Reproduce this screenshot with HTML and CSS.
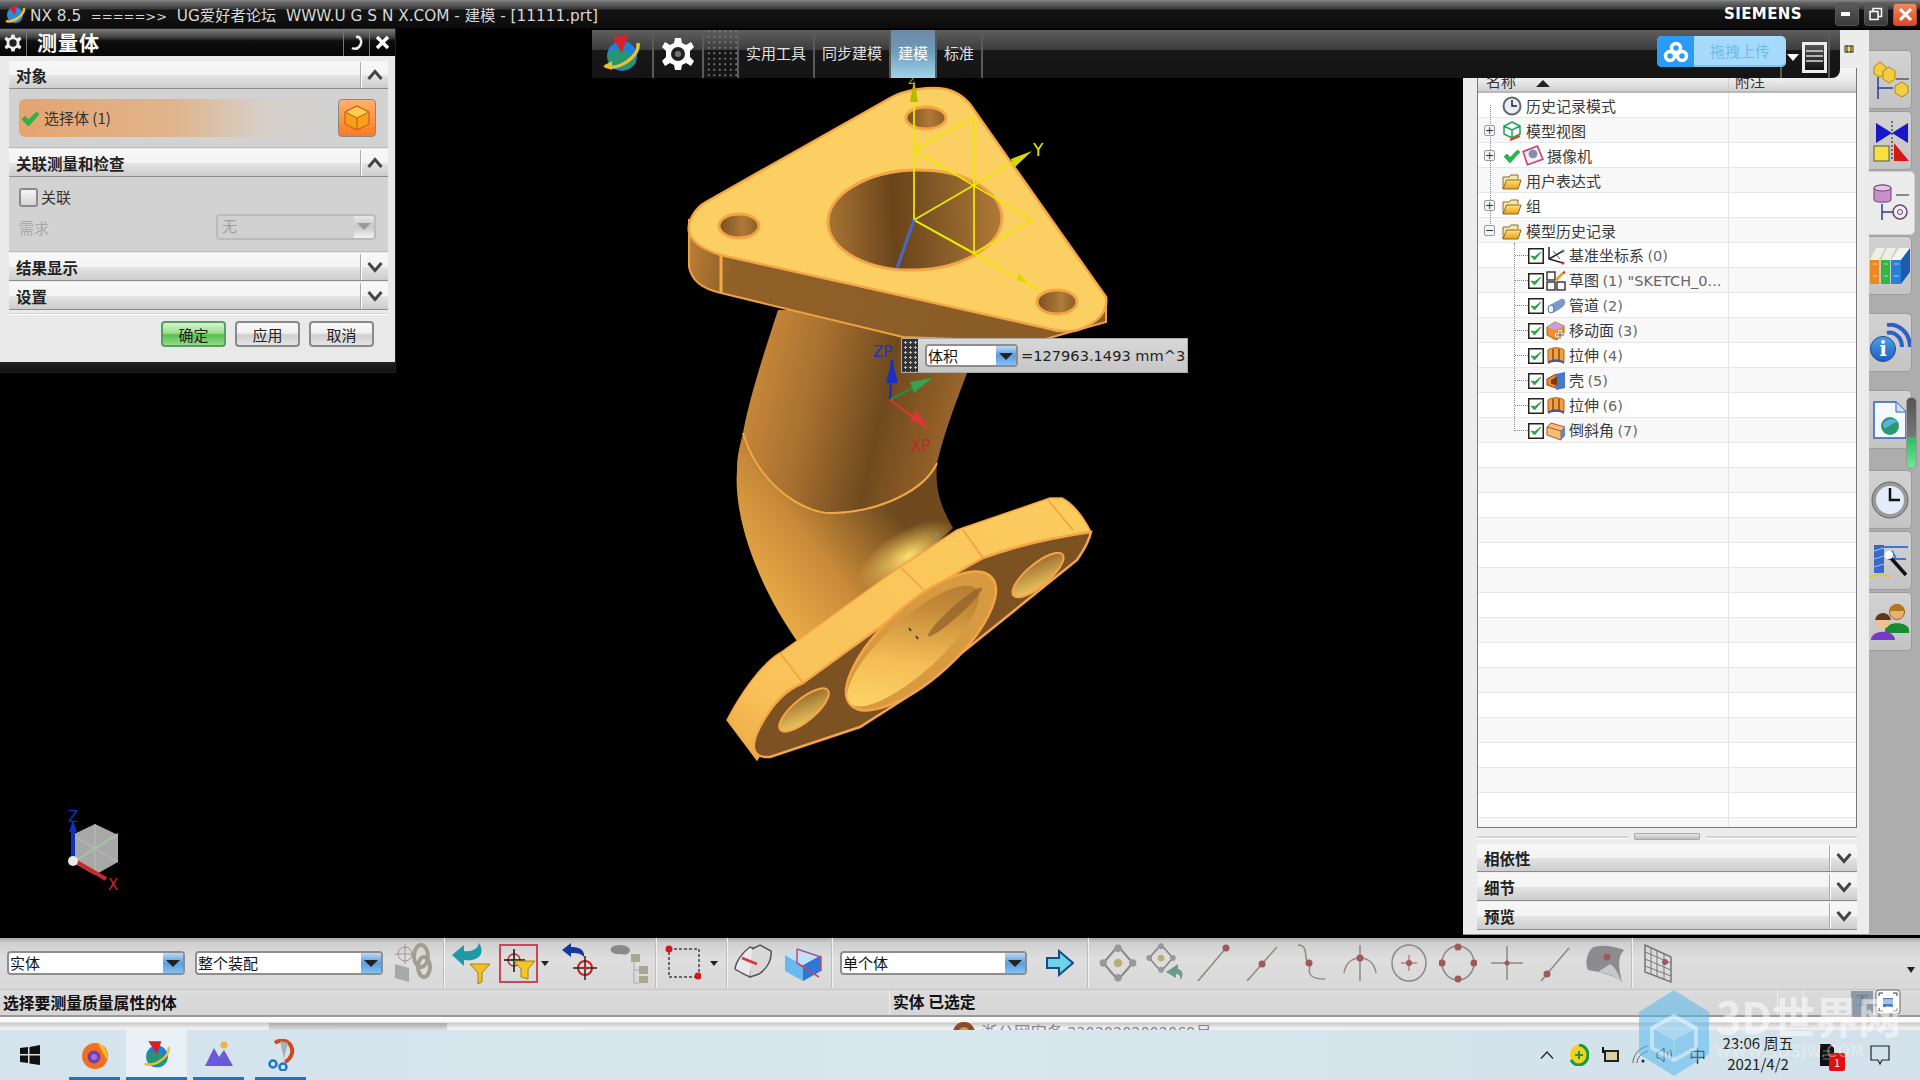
FILE: index.html
```html
<!DOCTYPE html>
<html lang="zh">
<head>
<meta charset="utf-8">
<title>NX 8.5</title>
<link rel="stylesheet" href="styles.css">
</head>
<body>
<svg class="sprite" width="0" height="0">
  <defs>
    <linearGradient id="gBlue" x1="0" y1="0" x2="0" y2="1"><stop offset="0" stop-color="#4aa0e8"/><stop offset="1" stop-color="#1c5fc0"/></linearGradient>
    <linearGradient id="gFolder" x1="0" y1="0" x2="0" y2="1"><stop offset="0" stop-color="#ffe27a"/><stop offset="1" stop-color="#e8a018"/></linearGradient>
    <symbol id="chevDown" viewBox="0 0 16 12"><path d="M1.500 2 8 9.500 14.500 2" fill="none" stroke="#444" stroke-width="3"/></symbol>
    <symbol id="chevUp" viewBox="0 0 16 12"><path d="M1.500 10 8 2.500 14.500 10" fill="none" stroke="#444" stroke-width="3"/></symbol>
    <symbol id="tick" viewBox="0 0 16 16"><path d="M0 8.500 3 6 6 9.500 13.500 2 16 4 6 15z" fill="#22b84a" stroke="#1a9a3c" stroke-width=".6"/></symbol>
    <symbol id="folder" viewBox="0 0 20 18"><path d="M1 17V5h6l2-2h7v4" fill="#f6e7b0" stroke="#8a6a20"/><path d="M1 17 4.500 8H19l-3 9z" fill="url(#gFolder)" stroke="#8a6a20"/></symbol>
    <symbol id="extrude" viewBox="0 0 20 20"><path d="M2 4C6 1 14 1 18 4V16C14 13 6 13 2 16z" fill="#f0a040" stroke="#a8601a"/><path d="M7 3V14M13 3V14" stroke="#8a4a10" stroke-width="1.500"/><path d="M2 16C6 13 14 13 18 16L18 18C14 15 6 15 2 18z" fill="#3a50b0"/></symbol>
    <symbol id="boxcheck" viewBox="0 0 16 16"><rect x=".75" y=".75" width="14.500" height="14.500" fill="#fff" stroke="#222" stroke-width="1.500"/><path d="M3 8 6.500 12 13 4 6.800 8.800z" fill="#22a83c" stroke="#22a83c"/></symbol>
    <symbol id="snap" viewBox="0 0 38 38"><path d="M19 3 33 19 19 35 5 19z" fill="none" stroke="#888" stroke-width="2"/><g fill="#999"><circle cx="19" cy="5" r="3.500"/><circle cx="33" cy="19" r="3.500"/><circle cx="19" cy="33" r="3.500"/><circle cx="5" cy="19" r="3.500"/></g><circle cx="19" cy="19" r="4" fill="#b8b070"/></symbol>
  </defs>
</svg>

<header class="titlebar">
  <svg class="title-logo" width="24" height="22" viewBox="0 0 24 22"><circle cx="12" cy="12" r="8" fill="#2a8ae0"/><path d="M6 5 14 2 12 12z" fill="#d8202c"/><path d="M3 18C10 20 22 12 21 5" fill="none" stroke="#f0c030" stroke-width="2.500"/></svg>
  <span class="title-text">NX 8.5  <span class="title-arrow">=====&gt;&gt;</span>  UG爱好者论坛  WWW.U G S N X.COM - 建模 - [11111.prt]</span>
  <span class="brand">SIEMENS</span>
  <div class="winbtns">
    <span class="winbtn"><svg width="12" height="6" viewBox="0 0 12 6"><rect y="1" width="9" height="4" fill="#fff"/></svg></span>
    <span class="winbtn"><svg width="14" height="14" viewBox="0 0 14 14" fill="none" stroke="#fff" stroke-width="1.500"><rect x="1" y="4.500" width="8" height="8"/><path d="M4 4V1.500H12.500V9.500H9.500"/></svg></span>
    <span class="winbtn winbtn-close"><svg width="15" height="15" viewBox="0 0 15 15"><path d="M2 2 13 13M13 2 2 13" stroke="#fff" stroke-width="3"/></svg></span>
  </div>
</header>

<main class="main">
  <section class="viewport">
    <svg class="model" viewBox="0 28 1463 910" width="1463" height="910">
      <defs>
        <linearGradient id="pipeUp" gradientUnits="userSpaceOnUse" x1="745" y1="380" x2="965" y2="430"><stop offset="0" stop-color="#c98a3a"/><stop offset=".3" stop-color="#a87030"/><stop offset=".62" stop-color="#6f4a1e"/><stop offset=".82" stop-color="#8a5a25"/><stop offset="1" stop-color="#a06c2e"/></linearGradient>
        <linearGradient id="pipeLow" gradientUnits="userSpaceOnUse" x1="750" y1="600" x2="880" y2="495"><stop offset="0" stop-color="#eeaf48"/><stop offset=".5" stop-color="#c88a38"/><stop offset="1" stop-color="#6f4a1e"/></linearGradient>
        <radialGradient id="glow"><stop offset="0" stop-color="#ffe070"/><stop offset="1" stop-color="#ffd060" stop-opacity="0"/></radialGradient>
        <linearGradient id="side" gradientUnits="userSpaceOnUse" x1="690" y1="260" x2="1100" y2="330"><stop offset="0" stop-color="#b87c35"/><stop offset=".1" stop-color="#8f6028"/><stop offset="1" stop-color="#8a5c26"/></linearGradient>
        <linearGradient id="holeBig" x1="0" y1="0" x2="1" y2="0"><stop offset="0" stop-color="#a87434"/><stop offset=".38" stop-color="#6a441a"/><stop offset=".55" stop-color="#7a5222"/><stop offset="1" stop-color="#b07a38"/></linearGradient>
        <linearGradient id="holeSmall" x1="0" y1="0" x2="1" y2="0"><stop offset="0" stop-color="#7a5020"/><stop offset=".6" stop-color="#b07a38"/><stop offset="1" stop-color="#8a5c26"/></linearGradient>
        <linearGradient id="faceLight" x1="0" y1="1" x2="1" y2="0"><stop offset="0" stop-color="#eaa845"/><stop offset=".18" stop-color="#f8c258"/><stop offset="1" stop-color="#fccb5e"/></linearGradient>
        <linearGradient id="borePipe" gradientUnits="userSpaceOnUse" x1="860" y1="700" x2="985" y2="590"><stop offset="0" stop-color="#ffd868"/><stop offset=".35" stop-color="#f4bd55"/><stop offset=".7" stop-color="#c48a38"/><stop offset="1" stop-color="#a87030"/></linearGradient>
        <linearGradient id="holeLit" x1="0" y1="1" x2="1" y2="0"><stop offset="0" stop-color="#ffd868"/><stop offset="1" stop-color="#8a5c26"/></linearGradient>
      </defs>
      <!-- pipe -->
      <path d="M778 310C765 350 750 395 743 433C760 490 810 515 833 513C880 512 925 490 937 463C945 430 955 405 967 373L1010 310z" fill="url(#pipeUp)"/>
      <path d="M743 433C760 490 810 515 833 513C880 512 925 490 937 463C935 490 940 505 953 528L900 575 800 645C760 590 733 520 737 470C737 455 740 445 743 433z" fill="url(#pipeLow)"/>
      <ellipse cx="908" cy="556" rx="56" ry="26" fill="url(#glow)" transform="rotate(-30 908 556)"/>
      <path d="M743 433C760 490 810 515 833 513C880 512 925 490 937 463" fill="none" stroke="#f0a848" stroke-width="2"/>
      <!-- top flange -->
      <path d="M689 220V267C692 280 700 288 721 293L903 337 1035 342 1106 322V297L721 230z" fill="url(#side)" stroke="#f0a040" stroke-width="2"/>
      <path d="M721 255V293" stroke="#f5a848" stroke-width="3"/>
      <path d="M892 97C905 90 930 86 945 89C958 92 968 100 974 110L1106 297C1108 310 1100 322 1078 330C1068 332 1055 331 1046 328L721 255C705 250 692 243 689 232C687 222 695 208 706 202z" fill="#fccf62" stroke="#f5a545" stroke-width="2.500"/>
      <ellipse cx="915" cy="220" rx="87" ry="50" fill="url(#holeBig)" stroke="#f5a545" stroke-width="3" transform="rotate(-2 915 220)"/>
      <ellipse cx="926" cy="118" rx="20" ry="11" fill="url(#holeSmall)" stroke="#f5a545" stroke-width="3"/>
      <ellipse cx="739" cy="226" rx="20" ry="12" fill="url(#holeSmall)" stroke="#f5a545" stroke-width="3"/>
      <ellipse cx="1057" cy="302" rx="20" ry="12" fill="url(#holeSmall)" stroke="#f5a545" stroke-width="3"/>
      <!-- bottom flange -->
      <path d="M727 720C740 695 760 665 780 653L900 567 957 530 1050 498H1062C1075 505 1085 520 1091 532L1000 560 800 690 757 760z" fill="url(#faceLight)" stroke="#f5a545" stroke-width="1.500"/>
      <path d="M1091 532C1088 545 1082 552 1077 560L907 697 860 727 770 757C755 758 750 750 757 733C770 705 785 690 803 683L927 593C945 580 960 570 983 558C1010 548 1050 538 1091 532z" fill="#7d5222" stroke="#f5a545" stroke-width="2.500"/>
      <path d="M900 567 927 593M963 530 983 558M780 653 803 683M1048 500 1073 530" stroke="#f0a040" stroke-width="1.500"/>
      <ellipse cx="921" cy="641" rx="95" ry="37" fill="#d89a40" stroke="#f5a545" stroke-width="2.500" transform="rotate(-42 921 641)"/>
      <ellipse cx="913" cy="646" rx="85" ry="27" fill="url(#borePipe)" transform="rotate(-42 913 646)"/>
      <ellipse cx="955" cy="612" rx="36" ry="5" fill="#8f6028" opacity=".7" transform="rotate(-42 955 612)"/>
      <ellipse cx="1038" cy="575" rx="32" ry="11" fill="url(#holeLit)" stroke="#f5a545" stroke-width="2" transform="rotate(-40 1038 575)"/>
      <ellipse cx="804" cy="710" rx="31" ry="11" fill="url(#holeLit)" stroke="#f5a545" stroke-width="2" transform="rotate(-40 804 710)"/>
      <path d="M935 541 938 532" stroke="#8a8a70" stroke-width="2"/>
      <path d="M909 628 911 631M916 636 918 639" stroke="#444" stroke-width="2"/>
      <!-- WCS -->
      <g stroke="#e8e800" stroke-width="1.800" fill="none">
        <path d="M914 90V220"/>
        <path d="M914 220 1017 160M914 220 1039 290"/>
        <path d="M914 150 974 117V253M914 150 1032 220 974 253 914 220"/>
      </g>
      <path d="M914 80 918 102H910z" fill="#b8b800"/>
      <path d="M1032 151 1014 168 1011 159z" fill="#d8d800"/>
      <path d="M1027 283 1017 280 1019 273z" fill="#d8d800"/>
      <path d="M914 220 897 268" stroke="#4868c8" stroke-width="3"/>
      <text class="axis-label axis-y" x="1033" y="156">Y</text>
      <text class="axis-label axis-z" x="908" y="84">Z</text>
      <!-- part triad -->
      <g>
        <path d="M890 400 892 360" stroke="#1830c0" stroke-width="2.500"/>
        <path d="M892 360 898 383H886z" fill="#1830c0"/>
        <path d="M890 400 931 378" stroke="#209040" stroke-width="2"/>
        <path d="M932 378 914 393 910 382z" fill="#38a050"/>
        <path d="M890 400 928 428" stroke="#d83838" stroke-width="2"/>
        <path d="M929 429 910 420 916 410z" fill="#d83838"/>
        <text class="axis-label axis-zp" x="873" y="357">ZP</text>
        <text class="axis-label axis-xp" x="911" y="451">XP</text>
      </g>
      <!-- view triad -->
      <g>
        <path d="M95 824 118 835V862L95 875 72 862V835z" fill="#a8a8a8"/>
        <path d="M95 824V875M72 835 118 862M118 835 72 862" stroke="#bcbcbc" stroke-width="1"/>
        <path d="M75 861 118 834" stroke="#a0c8a0" stroke-width="2"/>
        <path d="M73 861V830" stroke="#1030c0" stroke-width="4"/>
        <path d="M73 820 77 832H69z" fill="#1030c0"/>
        <path d="M75 861 106 879" stroke="#c82828" stroke-width="4"/>
        <circle cx="73" cy="861" r="5" fill="#e8e8e8"/>
        <text class="axis-label axis-view-z" x="68" y="822">Z</text>
        <text class="axis-label axis-view-x" x="108" y="890">X</text>
      </g>
    </svg>

    <div class="ribbon">
      <div class="rb-cell rb-logo">
        <svg width="44" height="42" viewBox="0 0 44 42"><circle cx="22" cy="23" r="15" fill="#1f80d8"/><path d="M8 20C14 14 30 14 36 30 30 38 14 38 8 28z" fill="#2c9c50" opacity=".75"/><path d="M12 4 28 2 22 20z" fill="#d8202c"/><path d="M5 33C18 38 40 24 38 10" fill="none" stroke="#e8c030" stroke-width="3.500"/><path d="M3 33 12 28V37z" fill="#e8c030"/></svg>
      </div>
      <div class="rb-cell rb-gear">
        <svg width="34" height="34" viewBox="0 0 34 34"><path d="M14 1H20L21 6 25 8 30 5 33 10 29 14V20L33 24 30 29 25 26 21 28 20 33H14L13 28 9 26 4 29 1 24 5 20V14L1 10 4 5 9 8 13 6z" fill="#fff"/><circle cx="17" cy="17" r="7" fill="#222"/><circle cx="17" cy="17" r="3" fill="#777"/></svg>
      </div>
      <div class="rb-cell rb-grid"></div>
      <div class="rb-cell rb-tab rb-w76">实用工具</div>
      <div class="rb-cell rb-tab rb-w76">同步建模</div>
      <div class="rb-cell rb-tab rb-active">建模</div>
      <div class="rb-cell rb-tab rb-w46">标准</div>
      <div class="rb-cell rb-fill"></div>
      <div class="rb-cell rb-menu">
        <span class="rb-tri"></span>
        <span class="rb-burger"><svg width="19" height="23" viewBox="0 0 19 23"><path d="M1 5H18M1 10H18M1 15H18" stroke="#ddd" stroke-width="1.500"/></svg></span>
      </div>
      <div class="rb-end"></div>
      <div class="upload">
        <span class="upload-icon"><svg width="26" height="22" viewBox="0 0 26 22" fill="none" stroke="#fff" stroke-width="3.500"><circle cx="13" cy="7" r="4.500"/><circle cx="7" cy="15" r="4.500"/><circle cx="19" cy="15" r="4.500"/></svg></span>
        <span class="upload-text">拖拽上传</span>
      </div>
    </div>

    <aside class="dialog">
      <div class="dlg-head">
        <span class="dlg-gear"><svg width="18" height="18" viewBox="0 0 34 34"><path d="M14 1H20L21 6 25 8 30 5 33 10 29 14V20L33 24 30 29 25 26 21 28 20 33H14L13 28 9 26 4 29 1 24 5 20V14L1 10 4 5 9 8 13 6z" fill="#eee"/><circle cx="17" cy="17" r="7" fill="#222"/></svg></span>
        <span class="dlg-title">测量体</span>
        <span class="dlg-btn"><svg width="16" height="16" viewBox="0 0 16 16"><path d="M7 2C12 1 14 8 10 12 8 14 5 14 3 13" fill="none" stroke="#eee" stroke-width="2.500"/></svg></span>
        <span class="dlg-btn"><svg width="15" height="15" viewBox="0 0 15 15"><path d="M2 2 13 13M13 2 2 13" stroke="#fff" stroke-width="3.500"/></svg></span>
      </div>
      <div class="dlg-body">
        <div class="acc-head"><span class="acc-label">对象</span><span class="acc-tog"><svg width="16" height="12"><use href="#chevUp"/></svg></span></div>
        <div class="dlg-sec dlg-sec-obj">
          <div class="sel-row"><svg class="sel-tick" width="17" height="17"><use href="#tick"/></svg><span>选择体 (1)</span></div>
          <span class="sel-btn"><svg width="28" height="28" viewBox="0 0 28 28"><path d="M14 2 26 8V20L14 26 2 20V8z" fill="#f9a018" stroke="#b85a10"/><path d="M2 8 14 14 26 8 14 2z" fill="#ffcc50" stroke="#b85a10"/><path d="M14 14V26" stroke="#b85a10"/></svg></span>
        </div>
        <div class="acc-head"><span class="acc-label">关联测量和检查</span><span class="acc-tog"><svg width="16" height="12"><use href="#chevUp"/></svg></span></div>
        <div class="dlg-sec dlg-sec-assoc">
          <label class="chk-row"><span class="chk"></span><span>关联</span></label>
          <div class="req-row"><span class="req-label">需求</span>
            <span class="combo combo-off combo-req"><span class="combo-val">无</span><span class="combo-btn"></span></span>
          </div>
        </div>
        <div class="acc-head acc-result"><span class="acc-label">结果显示</span><span class="acc-tog"><svg width="16" height="12"><use href="#chevDown"/></svg></span></div>
        <div class="acc-head acc-set"><span class="acc-label">设置</span><span class="acc-tog"><svg width="16" height="12"><use href="#chevDown"/></svg></span></div>
        <div class="dlg-actions">
          <button class="btn btn-ok">确定</button>
          <button class="btn">应用</button>
          <button class="btn">取消</button>
        </div>
      </div>
      <div class="dlg-foot"></div>
    </aside>

    <div class="readout">
      <span class="readout-grip"></span>
      <span class="combo combo-read"><span class="combo-val">体积</span><span class="combo-btn"></span></span>
      <span class="readout-val">=127963.1493 mm^3</span>
    </div>
  </section>

  <section class="panel">
    <svg class="pin" width="10" height="10" viewBox="0 0 10 10"><rect x="1" y="2" width="8" height="6" fill="#f0e060" stroke="#333"/><path d="M3 1V9M7 1V9" stroke="#333"/></svg>
    <div class="tree">
      <div class="tree-head">
        <span class="th-name">名称<svg class="sort" width="14" height="7" viewBox="0 0 14 7"><path d="M7 0 14 7H0z" fill="#222"/></svg></span>
        <span class="th-note">附注</span>
      </div>
      <div class="tree-body">
        <span class="vline vline-a"></span><span class="vline vline-b"></span>

        <div class="row"><span class="exp exp-none"></span><svg class="ico" width="20" height="20" viewBox="0 0 20 20"><circle cx="10" cy="10" r="8.500" fill="#e8eef8" stroke="#666" stroke-width="2"/><path d="M10 4V10H15" stroke="#222" stroke-width="1.500" fill="none"/></svg><span class="lbl">历史记录模式</span></div>
        <div class="row"><span class="exp">+</span><svg class="ico" width="20" height="20" viewBox="0 0 20 20" fill="none" stroke="#20a060" stroke-width="1.500"><path d="M10 1 18 5V13L10 17 2 13V5zM2 5 10 9 18 5M10 9V17"/><path d="M8 19 18 15" stroke="#e04020" stroke-width="2"/></svg><span class="lbl">模型视图</span></div>
        <div class="row"><span class="exp">+</span><svg class="ico-tick" width="16" height="16"><use href="#tick"/></svg><svg class="ico" width="20" height="20" viewBox="0 0 20 20"><path d="M1 6 14 1 19 13 5 18z" fill="#f4f0f4" stroke="#d04070" stroke-width="1.500"/><circle cx="10" cy="8" r="4" fill="#8090b0"/></svg><span class="lbl lbl-cam">摄像机</span></div>
        <div class="row"><span class="exp exp-none"></span><svg class="ico" width="20" height="20"><use href="#folder"/></svg><span class="lbl">用户表达式</span></div>
        <div class="row"><span class="exp">+</span><svg class="ico" width="20" height="20"><use href="#folder"/></svg><span class="lbl">组</span></div>
        <div class="row"><span class="exp">−</span><svg class="ico" width="20" height="20"><use href="#folder"/></svg><span class="lbl">模型历史记录</span></div>

        <div class="row row-sub"><span class="elbow"></span><svg class="cb" width="16" height="16"><use href="#boxcheck"/></svg><svg class="ico-sub" width="20" height="20" viewBox="0 0 20 20" fill="none"><path d="M3 1V13L17 17M3 13 17 5" stroke="#222" stroke-width="1.500"/><path d="M7 5 14 13" stroke="#555"/><circle cx="17" cy="5" r="1.500" fill="#20a040"/><circle cx="17" cy="17" r="1.500" fill="#d03030"/></svg><span class="lbl">基准坐标系 <em>(0)</em></span></div>
        <div class="row row-sub"><span class="elbow"></span><svg class="cb" width="16" height="16"><use href="#boxcheck"/></svg><svg class="ico-sub" width="20" height="20" viewBox="0 0 20 20" fill="none" stroke="#222" stroke-width="1.300"><rect x="1" y="1" width="8" height="8"/><rect x="1" y="11" width="8" height="8"/><rect x="11" y="11" width="8" height="8"/><path d="M10 9 17 2" stroke="#e8a020" stroke-width="2.500"/><path d="M17 2 19 1" stroke="#d02020" stroke-width="2"/></svg><span class="lbl">草图 <em>(1) "SKETCH_0...</em></span></div>
        <div class="row row-sub"><span class="elbow"></span><svg class="cb" width="16" height="16"><use href="#boxcheck"/></svg><svg class="ico-sub" width="20" height="20" viewBox="0 0 20 20"><path d="M4 9 15 3C18 2 20 5 19 8 18 11 8 17 6 17 2 18 0 12 4 9z" fill="#7a98c8"/><ellipse cx="5" cy="13" rx="3" ry="4" fill="#f0f4fa" stroke="#5070a0"/></svg><span class="lbl">管道 <em>(2)</em></span></div>
        <div class="row row-sub"><span class="elbow"></span><svg class="cb" width="16" height="16"><use href="#boxcheck"/></svg><svg class="ico-sub" width="20" height="20" viewBox="0 0 20 20"><path d="M1 6 9 1 18 5V14L10 19 1 14z" fill="#f09030" stroke="#a86020"/><path d="M1 6 9 1 18 5 10 9z" fill="#c8a0e0"/><path d="M14 9V19M9 14H19" stroke="#fff" stroke-width="3"/><path d="M14 10V18M10 14H18" stroke="#555" stroke-width="1"/></svg><span class="lbl">移动面 <em>(3)</em></span></div>
        <div class="row row-sub"><span class="elbow"></span><svg class="cb" width="16" height="16"><use href="#boxcheck"/></svg><svg class="ico-sub" width="20" height="20"><use href="#extrude"/></svg><span class="lbl">拉伸 <em>(4)</em></span></div>
        <div class="row row-sub"><span class="elbow"></span><svg class="cb" width="16" height="16"><use href="#boxcheck"/></svg><svg class="ico-sub" width="20" height="20" viewBox="0 0 20 20"><path d="M1 8 10 3V17L1 14z" fill="#e88a30" stroke="#8a4a10"/><path d="M10 3 19 1V17L10 19z" fill="#4a78c8"/><path d="M5 9 11 6V14L5 13z" fill="#7a3a10"/></svg><span class="lbl">壳 <em>(5)</em></span></div>
        <div class="row row-sub"><span class="elbow"></span><svg class="cb" width="16" height="16"><use href="#boxcheck"/></svg><svg class="ico-sub" width="20" height="20"><use href="#extrude"/></svg><span class="lbl">拉伸 <em>(6)</em></span></div>
        <div class="row row-sub"><span class="elbow"></span><svg class="cb" width="16" height="16"><use href="#boxcheck"/></svg><svg class="ico-sub" width="20" height="20" viewBox="0 0 20 20"><path d="M1 6 5 2 19 6 15 10 1 6V14L15 19V10" fill="#f0c070" stroke="#c04848"/><path d="M15 10 19 6V15L15 19z" fill="#5a88d0"/></svg><span class="lbl">倒斜角 <em>(7)</em></span></div>
      </div>
    </div>
    <div class="splitter"><span class="split-line"></span><span class="split-grip"></span><span class="split-line"></span></div>
    <div class="panel-acc">
      <div class="acc-head"><span class="acc-label">相依性</span><span class="acc-tog"><svg width="16" height="12"><use href="#chevDown"/></svg></span></div>
      <div class="acc-head"><span class="acc-label">细节</span><span class="acc-tog"><svg width="16" height="12"><use href="#chevDown"/></svg></span></div>
      <div class="acc-head"><span class="acc-label">预览</span><span class="acc-tog"><svg width="16" height="12"><use href="#chevDown"/></svg></span></div>
    </div>
  </section>

  <nav class="tabs">
    <span class="tab"><svg width="38" height="42" viewBox="0 0 38 42"><g fill="#f4cc40" stroke="#b08a10"><path d="M3 8 9 3 15 8V15L9 18 3 15z"/><path d="M12 12 18 8 24 12V20L18 24 12 20z"/><path d="M24 27 31 23 37 27V34L31 38 24 34z"/></g><path d="M7 18V40M7 29H22" stroke="#2a3aa0" stroke-width="1.500" fill="none"/><path d="M25 20H38" stroke="#222"/></svg></span>
    <span class="tab"><svg width="38" height="42" viewBox="0 0 38 42"><path d="M5 3 21 13 5 23zM37 3 21 13 37 23z" fill="#1818c8"/><rect x="3" y="26" width="15" height="15" fill="#f4e040" stroke="#555"/><path d="M23 23 38 41H23z" fill="#d81818"/><path d="M21 1V41" stroke="#111" stroke-dasharray="2 2"/></svg></span>
    <span class="tab tab-on"><svg width="38" height="42" viewBox="0 0 38 42"><path d="M2 6C2 2 19 2 19 6V18C19 21 2 21 2 18z" fill="#c890c8" stroke="#704070"/><ellipse cx="10.500" cy="6" rx="8.500" ry="3" fill="#e8c0e8" stroke="#704070"/><path d="M10 22V38M10 30H22" stroke="#2a3aa0" stroke-width="1.500" fill="none"/><circle cx="28" cy="30" r="7" fill="none" stroke="#704070" stroke-width="1.500"/><circle cx="28" cy="30" r="2.500" fill="none" stroke="#704070"/><path d="M24 13H37" stroke="#222"/></svg></span>
    <span class="tab tab-books"><svg width="42" height="40" viewBox="0 0 42 40"><path d="M1 14H10V38H1z" fill="#e88a20"/><path d="M1 14 7 2H16L10 14z" fill="#f0f0e0"/><path d="M12 14H21V38H12z" fill="#30b840"/><path d="M12 14 18 2H27L21 14z" fill="#f0f0e0"/><path d="M22 14H32V38H22z" fill="#2a80d8"/><path d="M22 14 30 2H41L32 14z" fill="#f4f4f0"/><path d="M32 14 41 2V26L32 38z" fill="#1c5cb0"/><path d="M4 18H8M15 18H19M25 18H30M4 30H8M15 30H19M25 30H30" stroke="#fff" opacity=".6"/></svg></span>
    <span class="tab tab-gap"><svg width="42" height="40" viewBox="0 0 42 40"><path d="M18 10C25 8 33 14 33 24M18 2C30 0 41 10 41 24" fill="none" stroke="#2a60c8" stroke-width="4"/><circle cx="14" cy="26" r="12.500" fill="url(#gBlue)" stroke="#1a4a9a"/><text class="tab-i" x="14" y="33">i</text></svg></span>
    <span class="tab tab-gap"><svg width="36" height="40" viewBox="0 0 36 40"><path d="M2 2H24L34 12V38H2z" fill="#f4f8ff" stroke="#2a60c8" stroke-width="1.500"/><path d="M24 2V12H34" fill="#cfe0f8" stroke="#2a60c8"/><circle cx="18" cy="26" r="9" fill="#2a9a68"/><path d="M11 24C14 18 24 18 26 22 20 22 18 28 12 28z" fill="#5ab0e0"/></svg></span>
    <span class="tab tab-gap-l"><svg width="40" height="40" viewBox="0 0 40 40"><circle cx="20" cy="20" r="18" fill="#9a9a9a" stroke="#666"/><circle cx="20" cy="20" r="14" fill="#e4ecfa"/><path d="M20 8V20H30" stroke="#111" stroke-width="2.500" fill="none"/></svg></span>
    <span class="tab"><svg width="40" height="40" viewBox="0 0 40 40"><path d="M4 4H14V32H4z" fill="#3a68c8"/><path d="M4 10 14 7M4 18 14 15M4 26 14 23" stroke="#a0c0f0"/><path d="M14 6H38M18 18H36M22 10 26 18" stroke="#3a78d8" stroke-width="2"/><path d="M20 16 36 34" stroke="#111" stroke-width="3.500"/><circle cx="19" cy="14" r="4" fill="#fff"/><path d="M0 36 10 33 20 36" stroke="#e8c020" stroke-width="1.500" fill="none"/></svg></span>
    <span class="tab"><svg width="40" height="38" viewBox="0 0 40 38"><circle cx="27" cy="9" r="7.500" fill="#e8b070" stroke="#a06020"/><path d="M27 1A8 8 0 0 1 35 8L19 8A8 8 0 0 1 27 1z" fill="#b07820"/><path d="M15 27C15 18 39 18 39 27V30H15z" fill="#1a8a30"/><circle cx="13" cy="18" r="7.500" fill="#f0c090"/><path d="M13 10A8 8 0 0 1 21 17L5 17A8 8 0 0 1 13 10z" fill="#5a3a20"/><path d="M1 37C1 26 25 26 25 37z" fill="#7a3ac8"/></svg></span>
    <span class="tab-scroll"></span>
  </nav>
</main>

<section class="toolbar">
  <div class="tg tg1">
    <span class="combo combo-a"><span class="combo-val">实体</span><span class="combo-btn"></span></span>
    <span class="combo combo-b"><span class="combo-val">整个装配</span><span class="combo-btn"></span></span>
    <span class="tool"><svg width="40" height="42" viewBox="0 0 40 42"><path d="M2 22 16 26V40L2 36z" fill="#a8a8a8"/><circle cx="12" cy="12" r="7" fill="none" stroke="#a88"/><path d="M12 2V22M2 12H22" stroke="#999"/><ellipse cx="28" cy="14" rx="7" ry="11" fill="none" stroke="#a0a090" stroke-width="4"/><ellipse cx="31" cy="25" rx="6" ry="10" fill="none" stroke="#a0a090" stroke-width="4"/></svg></span>
  </div>
  <div class="tg tg2">
    <span class="tool"><svg width="40" height="42" viewBox="0 0 40 42"><path d="M2 13 14 3V9C22 10 28 7 29 1 36 12 28 20 14 18V24z" fill="#1f9aa8"/><path d="M20 22H40L32 31V40L28 42V31z" fill="#f0c020" stroke="#a88010"/></svg></span>
    <span class="tool-wrap"><span class="tool tool-hot"><svg width="36" height="36" viewBox="0 0 36 36"><circle cx="13" cy="15" r="6" fill="none" stroke="#c03030" stroke-width="1.500"/><path d="M13 4V27M3 15H24" stroke="#111" stroke-width="1.500"/><path d="M13 16H34L27 24V34L20 32V24z" fill="#f0c828" stroke="#a88010"/></svg></span><span class="tri-sm"></span></span>
    <span class="tool"><svg width="40" height="42" viewBox="0 0 40 42"><path d="M2 8 11 1V5C18 5 25 7 24 15 21 11 16 11 11 11V15z" fill="#123a9a"/><circle cx="25" cy="26" r="7" fill="none" stroke="#d81818" stroke-width="2"/><path d="M25 14V38M13 26H37" stroke="#222" stroke-width="1.500"/><circle cx="25" cy="26" r="2" fill="#d81818"/></svg></span>
    <span class="tool"><svg width="40" height="42" viewBox="0 0 40 42"><path d="M2 6C5 2 16 2 20 6 23 10 18 14 12 12 6 13 0 10 2 6z" fill="#8a8a8a"/><rect x="22" y="12" width="9" height="8" fill="#a8a890"/><rect x="30" y="24" width="9" height="8" fill="#a8a890"/><rect x="30" y="34" width="9" height="7" fill="#a8a890"/><path d="M25 20V41H30M25 28H30" stroke="#aaa" fill="none"/></svg></span>
  </div>
  <div class="tg tg3">
    <span class="tool-wrap tool-wrap-lg"><span class="tool"><svg width="36" height="36" viewBox="0 0 36 36"><rect x="4" y="4" width="30" height="28" fill="none" stroke="#444" stroke-width="1.500" stroke-dasharray="3 2"/><circle cx="4" cy="4" r="3.500" fill="#d81818"/><circle cx="33" cy="31" r="3.500" fill="#d81818"/></svg></span><span class="tri-sm"></span></span>
  </div>
  <div class="tg tg4">
    <span class="tool"><svg width="40" height="38" viewBox="0 0 40 38"><path d="M2 25C3 17 10 8 17 3L29 7C24 11 19 18 17 33 11 30 6 28 2 25z" fill="#e8e8ee" stroke="#555" stroke-width="1.500"/><path d="M19 5 27 1 38 7C39 15 35 24 26 30L17 33" fill="#d8d8d8" stroke="#555" stroke-width="1.500"/><path d="M9 14 24 20" stroke="#d03838" stroke-width="2.500"/></svg></span>
    <span class="tool"><svg width="40" height="40" viewBox="0 0 40 40"><path d="M2 12 20 22V38L2 28z" fill="#6ab8f0"/><path d="M20 22 38 12V28L20 38z" fill="#2a78d8"/><path d="M2 12 20 3 38 12 20 22z" fill="#bfe0f8"/><path d="M14 6V20L36 34M14 6 38 14V28" fill="none" stroke="#c84868" stroke-width="1.500"/></svg></span>
  </div>
  <div class="tg tg5">
    <span class="combo combo-c"><span class="combo-val">单个体</span><span class="combo-btn"></span></span>
    <span class="tool"><svg width="28" height="28" viewBox="0 0 28 28"><path d="M1 9H13V2L27 14 13 26V19H1z" fill="#6cd4e8" stroke="#1a4a8a" stroke-width="2"/></svg></span>
  </div>
  <div class="tg tg6">
    <span class="tool tool-s"><svg width="40" height="40"><use href="#snap"/></svg></span>
    <span class="tool tool-s"><svg width="40" height="42" viewBox="0 0 40 42"><use href="#snap" width="32" height="32"/><path d="M21 30 33 22V27C38 28 39 34 35 38 36 34 34 32 31 32V36z" fill="#6a9a90"/></svg></span>
    <span class="tool tool-l"><svg width="36" height="40" viewBox="0 0 36 40"><path d="M3 38 31 5" stroke="#8a8a80" stroke-width="1.500"/><circle cx="31" cy="5" r="3.500" fill="#a05858"/></svg></span>
    <span class="tool tool-l"><svg width="36" height="40" viewBox="0 0 36 40"><path d="M3 38 33 4" stroke="#8a8a80" stroke-width="1.500"/><circle cx="18" cy="21" r="3.500" fill="#a05858"/></svg></span>
    <span class="tool tool-l"><svg width="36" height="40" viewBox="0 0 36 40"><path d="M5 2C18 2 8 20 18 20 12 34 22 36 32 36" fill="none" stroke="#8a8a80" stroke-width="1.500"/><circle cx="16" cy="20" r="3.500" fill="#a05858"/></svg></span>
    <span class="tool tool-l"><svg width="36" height="40" viewBox="0 0 36 40"><path d="M18 2V38M2 30C4 18 12 15 18 15S32 18 34 30" fill="none" stroke="#8a8a80" stroke-width="1.500"/><circle cx="18" cy="15" r="3.500" fill="#a05858"/></svg></span>
    <span class="tool tool-l"><svg width="38" height="40" viewBox="0 0 38 40"><ellipse cx="19" cy="20" rx="17" ry="18" fill="none" stroke="#8a8a80" stroke-width="1.500"/><path d="M19 12V28M11 20H27" stroke="#a05858"/><circle cx="19" cy="20" r="3" fill="#a05858"/></svg></span>
    <span class="tool tool-l"><svg width="38" height="40" viewBox="0 0 38 40"><ellipse cx="19" cy="20" rx="16" ry="17" fill="none" stroke="#8a8a80" stroke-width="1.500"/><g fill="#a05858"><circle cx="19" cy="4" r="3.500"/><circle cx="19" cy="36" r="3.500"/><circle cx="3" cy="20" r="3.500"/><circle cx="35" cy="20" r="3.500"/></g></svg></span>
    <span class="tool tool-l"><svg width="36" height="40" viewBox="0 0 36 40"><path d="M18 3V37M2 20H34" stroke="#8a8a80" stroke-width="1.500"/><circle cx="18" cy="20" r="2.500" fill="#a05858"/></svg></span>
    <span class="tool tool-l"><svg width="36" height="40" viewBox="0 0 36 40"><path d="M3 38 31 5" stroke="#8a8a80" stroke-width="1.500"/><circle cx="9" cy="31" r="3.500" fill="#a05858"/></svg></span>
    <span class="tool tool-l"><svg width="42" height="42" viewBox="0 0 42 42"><path d="M8 6C14 2 30 4 40 8 34 14 34 24 38 40 28 32 14 30 4 28 0 20 4 10 8 6z" fill="#8c8c90"/><path d="M26 22C32 26 34 32 38 40 28 32 20 31 14 30z" fill="#c8c8c8"/><circle cx="23" cy="15" r="3.500" fill="#a05858"/></svg></span>
  </div>
  <div class="tg tg7">
    <span class="tool tool-grid"><svg width="30" height="42" viewBox="0 0 30 42"><path d="M2 3 28 15V40L2 30z" fill="none" stroke="#777" stroke-width="1.500"/><path d="M2 10 28 21M2 17 28 28M2 24 28 34M8 5V32M14 8V35M21 11V37" stroke="#777"/><circle cx="22" cy="20" r="3" fill="#a05858"/></svg></span>
    <span class="tb-more"></span>
  </div>
</section>

<section class="statusbar">
  <span class="st-main">选择要测量质量属性的体</span>
  <span class="st-sel">实体 已选定</span>
  <span class="st-cell"></span>
  <span class="st-cell st-icons">
    <svg width="22" height="24" viewBox="0 0 22 24"><rect width="22" height="24" fill="#8a9aa8"/><text class="st-t" x="11" y="15">T</text></svg>
    <svg class="st-frame" width="26" height="26" viewBox="0 0 26 26"><rect x="1" y="1" width="24" height="24" rx="3" fill="#fff" stroke="#666"/><rect x="8" y="9" width="10" height="9" fill="#4a7ac0"/><path d="M4 7V4H8M18 4H22V7M22 19V22H18M8 22H4V19" fill="none" stroke="#333"/></svg>
  </span>
</section>

<div class="webstrip">
  <span class="web-shade"></span>
  <span class="web-police"></span>
  <span class="web-icp">浙公网安备 33038202002069号</span>
</div>

<footer class="taskbar">
  <span class="start"><svg width="20" height="20" viewBox="0 0 20 20"><path d="M0 3 8 2V9H0zM9.500 2 20 0V9H9.500zM0 10.500H8V18L0 17zM9.500 10.500H20V20L9.500 18.500z" fill="#111"/></svg></span>
  <span class="task task-a"><svg width="30" height="30" viewBox="0 0 30 30"><circle cx="15" cy="16" r="13" fill="#f0701e"/><path d="M17 1C24 6 29 12 27 20L21 9z" fill="#fcc02c"/><circle cx="14" cy="17" r="6.500" fill="#7040b0"/><circle cx="14" cy="17" r="3" fill="#a070e0"/></svg></span>
  <span class="task task-b task-on"><svg width="32" height="32" viewBox="0 0 44 42"><circle cx="22" cy="23" r="15" fill="#1f80d8"/><path d="M8 20C14 14 30 14 36 30 30 38 14 38 8 28z" fill="#2c9c50" opacity=".75"/><path d="M10 2 28 2 22 20z" fill="#d8202c"/><path d="M5 33C18 38 40 24 38 10" fill="none" stroke="#e8c030" stroke-width="3.500"/></svg></span>
  <span class="task task-c"><svg width="30" height="28" viewBox="0 0 30 28"><path d="M1 25 10 7 15 16 20 9 29 25z" fill="#6a5ad8"/><circle cx="20" cy="4" r="3.500" fill="#f4b040"/></svg></span>
  <span class="task task-d"><svg width="30" height="32" viewBox="0 0 30 32"><path d="M9 4C14 0 22 1 25 7 28 13 25 20 19 23" fill="none" stroke="#d04a20" stroke-width="4"/><path d="M14 2 18 20 22 4" fill="#a8b0b8"/><circle cx="7" cy="25" r="3.500" fill="none" stroke="#1a78c8" stroke-width="2.500"/><circle cx="17" cy="28" r="3.500" fill="none" stroke="#1a78c8" stroke-width="2.500"/></svg></span>
  <span class="tray">
    <svg class="tray-up" width="14" height="8" viewBox="0 0 14 8"><path d="M1 7.500 7 1 13 7.500" fill="none" stroke="#222" stroke-width="1.200"/></svg>
    <svg class="tray-360" width="20" height="22" viewBox="0 0 20 22"><ellipse cx="10" cy="11" rx="9" ry="10.500" fill="#f0d020"/><path d="M10 1A9 10 0 0 1 10 21A9 10 0 0 1 2 16" fill="none" stroke="#189a40" stroke-width="3"/><path d="M10 7V15M6 11H14" stroke="#189a40" stroke-width="2"/></svg>
    <svg class="tray-bat" width="20" height="18" viewBox="0 0 20 18"><rect x="4" y="4" width="15" height="12" fill="#222"/><rect x="6" y="6" width="11" height="8" fill="#d8d0a0"/><path d="M3 1V7" stroke="#111" stroke-width="2"/></svg>
    <svg class="tray-wifi" width="18" height="20" viewBox="0 0 18 20" fill="none" stroke="#666"><path d="M1 18C1 10 7 3 16 1M5 18C5 13 9 8 16 6"/><circle cx="11" cy="16" r="1.500" fill="#222" stroke="none"/></svg>
    <svg class="tray-vol" width="20" height="20" viewBox="0 0 20 20" fill="none" stroke="#222"><path d="M1 7H4L8 3V17L4 13H1z"/><path d="M11 7C12 9 12 11 11 13M14 5C16 8 16 12 14 15"/></svg>
    <span class="tray-ime">中</span>
    <span class="clock"><span>23:06 周五</span><span>2021/4/2</span></span>
    <span class="tray-note"><svg width="16" height="24" viewBox="0 0 16 24"><path d="M1 1H11L15 5V23H1z" fill="#111"/><path d="M4 8H12M4 12H12M4 16H12" stroke="#777"/></svg><span class="badge">1</span></span>
    <svg class="tray-act" width="20" height="20" viewBox="0 0 20 20"><path d="M1 1H19V15H12L10 19 8 15H1z" fill="none" stroke="#222" stroke-width="1.200"/></svg>
  </span>
</footer>

<div class="watermark">
  <svg width="72" height="86" viewBox="0 0 72 86"><path d="M36 0 71 22V64L36 86 1 64V22z" fill="#58b8ec" opacity=".55"/><path d="M36 26 58 38V58L36 70 14 58V38z" fill="none" stroke="#fff" stroke-width="4" opacity=".45"/><path d="M36 26 58 38 36 50 14 38zM36 50V70" fill="#fff" stroke="#fff" opacity=".25"/></svg>
  <div class="wm-text"><span class="wm-big">3D世界网</span><span class="wm-small">WWW.3DSJW.COM</span></div>
</div>
</body>
</html>
```
FILE: styles.css
```css
* { box-sizing: border-box; }
html, body { margin: 0; padding: 0; }
body {
  width: 1920px; height: 1080px; overflow: hidden; position: relative;
  display: flex; flex-direction: column;
  font-family: "Noto Sans CJK SC", "DejaVu Sans", sans-serif;
  font-size: 15px; color: #222; background: #000;
}
svg { display: block; flex: none; }
.sprite { position: absolute; }

/* title bar */
.titlebar {
  height: 28px; flex: none; display: flex; align-items: center; position: relative;
  background: linear-gradient(#8a8a8a 0, #6a6a6a 2px, #3a3a3a 9px, #141414 10px, #0c0c0c 100%);
  padding-left: 3px;
}
.title-text {
  margin-left: 3px; color: #d8d8d8; white-space: pre; font-size: 15.300px;
  font-family: "DejaVu Sans", "Noto Sans CJK SC", sans-serif;
}
.title-arrow { font-size: 13px; }
.brand {
  margin-left: auto; margin-right: 33px; color: #fff; font-weight: 700; font-size: 15px; letter-spacing: .4px;
  font-family: "DejaVu Sans", sans-serif;
}
.winbtns { display: flex; gap: 5px; padding-right: 3px; }
.winbtn {
  width: 24px; height: 23px; border-radius: 3px; display: flex; align-items: center; justify-content: center;
  background: linear-gradient(#5a5a5a, #3a3a3a); border: 1px solid #555;
}
.winbtn-close { background: linear-gradient(#f08a60, #d84a28); border-color: #b85030; }

/* main */
.main { height: 910px; flex: none; display: flex; background: #000; }
.viewport { width: 1463px; flex: none; position: relative; z-index: 2; background: #000; }
.model { position: absolute; left: 0; top: 0; }
.axis-label { font: 15px "DejaVu Sans", sans-serif; }
.axis-y { fill: #e8e800; font-size: 17px; }
.axis-z { fill: #b8b800; font-size: 11px; }
.axis-zp { fill: #1c34c8; font-size: 15px; }
.axis-xp { fill: #c02828; font-size: 15px; }
.axis-view-z { fill: #1030c0; font-size: 15px; }
.axis-view-x { fill: #c82828; font-size: 15px; }

/* ribbon */
.ribbon {
  position: absolute; left: 592px; top: 2px; width: 1248px; height: 48px; display: flex;
  background: linear-gradient(#5e5e5e 0, #3c3c3c 41%, #181818 42%, #141414 100%);
  border-bottom-right-radius: 8px;
}
.rb-cell {
  display: flex; align-items: center; justify-content: center; flex: none;
  border-right: 2px solid #5a5a5a; height: 48px;
}
.rb-logo { width: 62px; }
.rb-gear { width: 50px; }
.rb-grid {
  width: 35px;
  background: radial-gradient(circle, #7a7a7a 1.100px, transparent 1.400px) 2px 4px / 5.500px 5.500px;
}
.rb-tab { color: #e0e0e0; font-size: 15px; padding-bottom: 3px; }
.rb-w76 { width: 76px; }
.rb-w46 { width: 46px; }
.rb-active { width: 46px; color: #fff; background: linear-gradient(#6c8aa4, #6f9cbc 45%, #9ed4ea); }
.rb-fill { flex: 1; }
.rb-menu { width: 48px; gap: 3px; padding-left: 4px; }
.rb-end { width: 10px; }
.rb-tri { border-style: solid; border-width: 7px 6px 0; border-color: #fff transparent transparent; margin-top: 6px; }
.rb-burger {
  width: 25px; height: 31px; border: 3px solid #eee; background: linear-gradient(#555, #111);
  display: flex; align-items: center; justify-content: center; margin-top: 6px;
}
.upload {
  position: absolute; left: 1065px; top: 6px; width: 129px; height: 31px; border-radius: 5px;
  display: flex; overflow: hidden; background: #a6dafa; box-shadow: inset 0 -2px 0 #7ec4ee;
}
.upload-icon { width: 37px; background: #2b9cf5; display: flex; align-items: center; justify-content: center; }
.upload-text { flex: 1; text-align: center; color: #6cbcee; font-size: 15px; line-height: 29px; }

/* dialog */
.dialog {
  position: absolute; left: 0; top: 1px; width: 395px; height: 343px;
  background: #e9e9e9; display: flex; flex-direction: column; box-shadow: 0 0 0 1px #222;
}
.dlg-head {
  height: 27px; flex: none; display: flex; align-items: center; color: #fff;
  background: linear-gradient(#7a7a7a 0, #444 8px, #0e0e0e 12px, #050505 100%);
}
.dlg-gear { width: 27px; height: 27px; display: flex; align-items: center; justify-content: center; border-right: 1px solid #777; }
.dlg-title { flex: 1; padding-left: 10px; font-size: 20px; font-weight: 700; letter-spacing: 1px; line-height: 24px; }
.dlg-btn { width: 26px; height: 27px; display: flex; align-items: center; justify-content: center; border-left: 1px solid #777; }
.dlg-body { flex: 1; padding: 5px 7px 0 9px; display: flex; flex-direction: column; }
.dlg-foot { height: 10px; flex: none; background: linear-gradient(#222, #111); }

.acc-head {
  height: 28px; flex: none; display: flex; align-items: center; justify-content: space-between;
  background: linear-gradient(#f7f7f7 0, #f4f4f4 50%, #e4e4e4 52%, #cdcdcd 100%);
  border-bottom: 1px solid #8c8c8c;
}
.acc-label { padding-left: 7px; font-weight: 700; font-size: 15.500px; color: #222; line-height: 30px; }
.acc-tog {
  width: 28px; height: 26px; border-left: 1px solid #aaa; box-shadow: inset 1px 0 0 #fff;
  display: flex; align-items: center; justify-content: center;
}
.dlg-sec { background: #d2d2d2; border-bottom: 1px solid #bbb; }
.dlg-sec-obj { height: 59px; display: flex; align-items: center; padding: 0 12px 0 10px; margin-bottom: 1px; }
.sel-row {
  flex: 1; height: 38px; border-radius: 6px; display: flex; align-items: center; padding-left: 3px; gap: 5px;
  background: linear-gradient(90deg, #e5a470, #e0b58d 50%, #d6d0ca 78%, #d2d2d2);
  color: #333; font-size: 15px; line-height: 34px;
}
.sel-btn {
  width: 38px; height: 38px; flex: none; margin-left: 4px; border-radius: 4px; border: 1px solid #888;
  background: linear-gradient(#ffb070, #ff7a20);
  display: flex; align-items: center; justify-content: center;
}
.dlg-sec-assoc { height: 75px; padding: 10px 12px 0 10px; margin-bottom: 0; }
.chk-row { display: flex; align-items: center; gap: 3px; font-size: 15px; color: #333; line-height: 20px; }
.chk { width: 19px; height: 19px; border: 2px solid #8a8a8a; border-radius: 3px; background: linear-gradient(#f4f4f4, #d6d6d6); }
.req-row { display: flex; align-items: center; justify-content: space-between; margin-top: 7px; }
.req-label { color: #a8a8a8; }
.acc-result { margin-top: 1px; }
.acc-set { margin-top: 1px; }
.dlg-actions { display: flex; justify-content: flex-end; gap: 9px; padding: 7px 14px 0 0; margin-top: 3px; border-top: 1px solid #d2d2d2; box-shadow: inset 0 1px 0 #fff; }
.btn {
  width: 65px; height: 26px; padding: 0; border: 2px solid #8a8a8a; border-radius: 4px; cursor: default;
  font: 15px "Noto Sans CJK SC", sans-serif; color: #222;
  background: linear-gradient(#fafafa, #efefef 45%, #cfcfcf 55%, #e4e4e4);
}
.btn-ok { border-color: #55a060; background: linear-gradient(#d6f4d0, #9ae08c 45%, #58c050 55%, #96d88a); }

/* combo */
.combo { display: flex; height: 24px; border: 2px solid #8e8e8e; border-radius: 4px; background: #fff; overflow: hidden; }
.combo-val { flex: 1; padding-left: 1px; font-size: 15px; color: #111; line-height: 19px; }
.combo-btn {
  width: 20px; flex: none; position: relative;
  background: linear-gradient(#bcd8f4, #5a9ee0 50%, #82c0f0);
}
.combo-btn::after {
  content: ""; position: absolute; left: 3px; top: 7px;
  border-style: solid; border-width: 7px 7px 0; border-color: #222 transparent transparent;
}
.combo-off { background: #d0d0d0; border-color: #bbb; }
.combo-off .combo-val { color: #a0a0a0; padding-left: 4px; }
.combo-off .combo-btn { background: linear-gradient(#e8e8e8, #c8c8c8 50%, #f4f4f4); }
.combo-off .combo-btn::after { border-top-color: #999; }
.combo-req { width: 160px; height: 26px; }
.combo-read { width: 93px; height: 23px; }
.combo-a { width: 178px; }
.combo-b { width: 188px; }
.combo-c { width: 187px; }

/* readout */
.readout {
  position: absolute; left: 901px; top: 310px; width: 287px; height: 35px; display: flex; align-items: center;
  background: linear-gradient(#d8d8d8, #c6c6c6); border: 1px solid #aaa;
}
.readout-grip {
  width: 16px; height: 33px; flex: none; margin-right: 7px;
  background: radial-gradient(circle, #bbb 1px, transparent 1.300px) 1px 1px / 5px 5px, #333;
}
.readout-val { margin-left: 3px; font: 14.600px "DejaVu Sans", sans-serif; color: #222; white-space: nowrap; }

/* right panel */
.panel {
  width: 406px; flex: none; position: relative; background: #ececec; margin-top: 2px; margin-bottom: 3px;
  padding: 38px 12px 0 14px; display: flex; flex-direction: column; border-bottom: 1px solid #999;
}
.pin { position: absolute; left: 381px; top: 14px; }
.tree { height: 760px; flex: none; border: 1px solid #777; border-top: 0; background: #fff; display: flex; flex-direction: column; }
.tree-head {
  height: 25px; flex: none; display: flex; padding-top: 3px;
  background: linear-gradient(#f6f6f6, #e8e8e8 60%, #cfcfcf); border-bottom: 2px solid #b8b8b8; color: #333;
}
.th-name { width: 250px; padding-left: 8px; display: flex; gap: 20px; line-height: 20px; }
.sort { margin-top: 9px; }
.th-note { padding-left: 6px; border-left: 1px solid #ccc; line-height: 20px; }
.tree-body {
  flex: 1; position: relative; overflow: hidden;
  background:
    linear-gradient(#e4e4e4, #e4e4e4) 250px 0 / 1px 100% no-repeat,
    repeating-linear-gradient(#fff 0, #fff 24px, #e8e8e8 24px, #e8e8e8 25px, #f8f8f8 25px, #f8f8f8 49px, #e8e8e8 49px, #e8e8e8 50px);
}
.vline { position: absolute; border-left: 1px dotted #888; width: 0; }
.vline-a { left: 12px; top: 12px; height: 125px; }
.vline-b { left: 36px; top: 150px; height: 188px; }
.row { height: 25px; display: flex; align-items: center; padding-left: 6px; position: relative; }
.exp {
  width: 11px; height: 11px; flex: none; border: 1px solid #999; border-radius: 2px; background: #f4f4f4;
  font: 11px/9px "DejaVu Sans", sans-serif; text-align: center; color: #333;
}
.exp-none { border-color: transparent; background: none; }
.ico { margin-left: 7px; }
.ico-tick { margin: 0 1px 0 9px; }
.ico-tick + .ico { margin-left: 1px; width: 22px; height: 22px; }
.lbl { margin-left: 4px; font-size: 15px; color: #3a3a3a; white-space: nowrap; line-height: 24px; }
.lbl em { font-style: normal; font-family: "DejaVu Sans", sans-serif; color: #666; font-size: 14.500px; }
.lbl-cam { margin-left: 3px; }
.row-sub { padding-left: 37px; }
.elbow { width: 13px; flex: none; border-top: 1px dotted #888; }
.cb { flex: none; }
.ico-sub { margin-left: 2px; }
.row-sub .lbl { margin-left: 3px; }
.splitter { display: flex; align-items: center; height: 15px; flex: none; margin-top: 1px; gap: 6px; }
.split-line { flex: 1; height: 2px; background: #d4d4d4; box-shadow: 0 1px 0 #fff; }
.split-grip { width: 66px; height: 7px; background: linear-gradient(#e8e8e8, #bcbcbc); border: 1px solid #aaa; border-radius: 1px; }
.panel-acc { display: flex; flex-direction: column; gap: 1px; }

/* tabs */
.tabs {
  width: 51px; flex: none; background: #adadad; display: flex; flex-direction: column; gap: 2px;
  padding-top: 20px; margin-top: 2px; margin-bottom: 3px; position: relative;
}
.tab {
  width: 43px; height: 59px; display: flex; align-items: center; justify-content: center;
  background: linear-gradient(#d2d2d2, #c4c4c4); border: 1px solid #9c9c9c; border-left: 0; border-radius: 0 5px 5px 0;
}
.tab-on { width: 47px; height: 64px; background: #ececec; margin-left: -1px; border-color: #ccc; margin-top: -1px; margin-bottom: -1px; }
.tab-gap { margin-top: 16px; }
.tab-gap-l { margin-top: 19px; }
.tab-books svg { margin-left: -1px; }
.tab-i { font: 700 20px "DejaVu Serif", serif; fill: #fff; text-anchor: middle; }
.tab-scroll {
  position: absolute; left: 37px; top: 367px; width: 11px; height: 72px; border-radius: 5px;
  background: linear-gradient(#555 0, #777 55%, #28c060 56%, #70e498 100%); border: 1px solid #999;
}

/* bottom toolbar */
.toolbar {
  height: 52px; flex: none; display: flex; align-items: stretch;
  background: linear-gradient(#a8a8a8 0, #d0d0d0 5px, #dedede 40%, #d8d8d8 100%); border-bottom: 1px solid #c4c4c4;
}
.tg { display: flex; align-items: center; height: 50px; flex: none; border-left: 1px solid #bdbdbd; box-shadow: inset 1px 0 0 #f2f2f2; }
.tg1 { width: 443px; padding-left: 7px; gap: 10px; border-left: 0; box-shadow: none; }
.tg2 { width: 212px; padding-left: 6px; gap: 9px; }
.tg3 { width: 71px; padding-left: 7px; }
.tg4 { width: 105px; padding-left: 6px; gap: 10px; }
.tg5 { width: 256px; padding-left: 8px; gap: 13px; }
.tg6 { width: 544px; padding-left: 6px; }
.tg7 { flex: 1; padding-left: 6px; }
.tool { width: 40px; height: 42px; flex: none; display: flex; align-items: center; justify-content: center; }
.tool-hot { border: 2px solid #c84858; width: 39px; height: 39px; }
.tool-wrap { display: flex; align-items: center; width: 52px; flex: none; gap: 3px; }
.tool-wrap-lg { width: 58px; gap: 7px; }
.tri-sm { border-style: solid; border-width: 5px 4px 0; border-color: #222 transparent transparent; }
.tool-s { width: 47px; }
.tool-l { width: 49px; }
.tool-grid { width: 40px; }
.tb-more { margin-left: auto; margin-right: 5px; margin-top: 14px; border-style: solid; border-width: 6px 4px 0; border-color: #222 transparent transparent; }

/* status */
.statusbar {
  height: 27px; flex: none; display: flex; align-items: center; color: #111;
  background: linear-gradient(#dcdcdc, #d6d6d6); border-bottom: 2px solid #999;
}
.st-main { width: 889px; padding-left: 3px; font-weight: 700; font-size: 15.800px; white-space: nowrap; }
.st-sel { width: 888px; padding-left: 3px; font-weight: 700; font-size: 15.800px; border-left: 1px solid #eee; height: 25px; line-height: 24px; }
.st-cell { width: 26px; height: 25px; border-left: 1px solid #eee; }
.st-icons { width: 117px; display: flex; align-items: center; padding-left: 47px; gap: 2px; border-left: 1px solid #eee; }
.st-t { font: 700 14px "DejaVu Serif", serif; fill: #6a7a88; text-anchor: middle; }
.st-frame { margin-top: -1px; }

/* strip under the app window */
.webstrip {
  height: 13px; flex: none; position: relative; overflow: hidden;
  background: linear-gradient(#fbfbfb 0, #f8f8f8 5px, #c8c8c8 6px, #efefef 11px, #f0f0f0 13px);
}
.web-shade { position: absolute; left: 269px; top: 6px; width: 178px; height: 7px; background: linear-gradient(#aaa, #ddd); }
.web-police { position: absolute; left: 953px; top: 5px; width: 22px; height: 22px; border-radius: 50%; background: #c8a040; box-shadow: inset 0 0 0 5px #8a4a30; }
.web-icp { position: absolute; left: 981px; top: 3px; color: #888; font-size: 16.500px; white-space: nowrap; }

/* taskbar */
.taskbar {
  height: 50px; flex: none; position: relative; display: flex; align-items: center;
  background: linear-gradient(90deg, #d4e3ec, #d8e6ed 50%, #d2e1ea);
}
.start { width: 69px; display: flex; justify-content: center; padding-right: 10px; flex: none; }
.task { height: 50px; display: flex; align-items: center; justify-content: center; flex: none; border-bottom: 3px solid #0f7ac8; padding-top: 3px; }
.task-a { width: 51px; }
.task-b { width: 61px; margin-left: 6px; }
.task-on { background: #e8f0f5; }
.task-c { width: 51px; margin-left: 6px; }
.task-d { width: 51px; margin-left: 11px; }
.tray { margin-left: auto; display: flex; align-items: center; padding-right: 30px; }
.tray-up { margin-right: 2px; }
.tray-360 { margin-left: 13px; }
.tray-bat { margin-left: 11px; }
.tray-wifi { margin-left: 12px; }
.tray-vol { margin-left: 6px; }
.tray-ime { margin-left: 13px; font-size: 17px; color: #111; width: 20px; line-height: 20px; text-shadow: 0 0 1px #fff; }
.clock { display: flex; flex-direction: column; align-items: center; margin-left: 13px; width: 72px; font-size: 15px; line-height: 21px; color: #222; white-space: nowrap; padding-bottom: 4px; }
.tray-note { position: relative; margin-left: 25px; }
.badge {
  position: absolute; left: 10px; top: 10px; width: 16px; height: 18px; border-radius: 2px;
  background: #e01010; color: #fff; font-size: 11px; line-height: 18px; text-align: center;
}
.tray-act { margin-left: 35px; }

/* watermark */
.watermark { position: absolute; left: 1638px; top: 990px; display: flex; gap: 6px; pointer-events: none; }
.wm-text { display: flex; flex-direction: column; color: rgba(255, 255, 255, .55); padding-top: 1px; }
.wm-big { font-weight: 700; font-size: 43px; line-height: 48px; white-space: nowrap; }
.wm-small { font: 15px "DejaVu Sans", sans-serif; letter-spacing: 1px; margin-top: 4px; white-space: nowrap; color: rgba(255, 255, 255, .4); }
```
